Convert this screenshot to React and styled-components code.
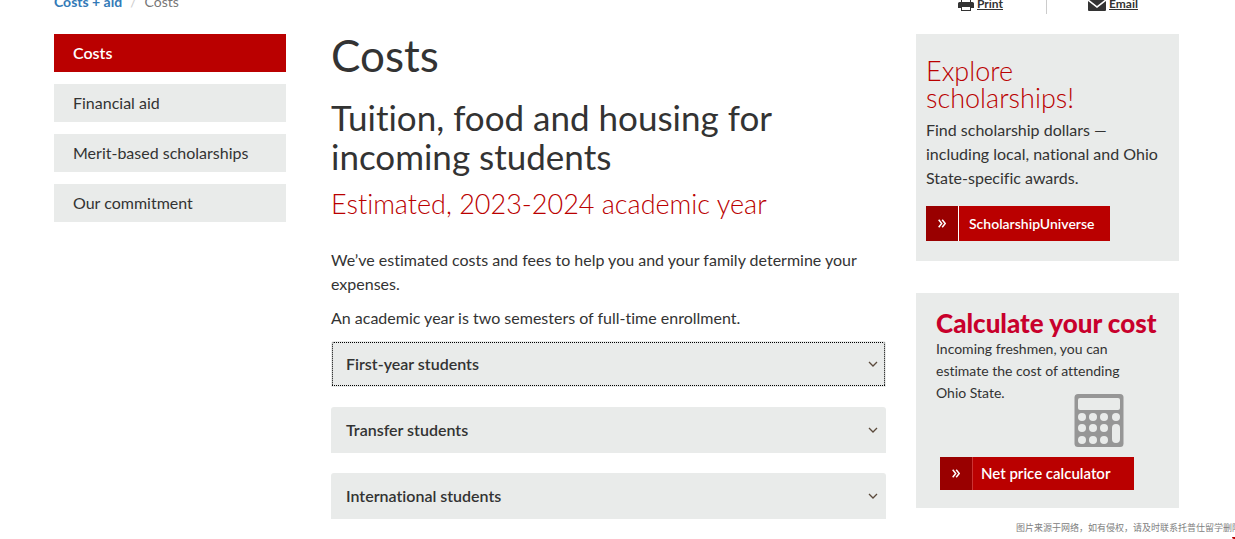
import React from 'react'
import styled, { createGlobalStyle } from 'styled-components'

const sideLinks = [
    { id: 1, title: 'Costs', active: true },
    { id: 2, title: 'Financial aid' },
    { id: 3, title: 'Merit-based scholarships' },
    { id: 4, title: 'Our commitment' },
]

const panels = [
    { id: 1, title: 'First-year students', focused: true },
    { id: 2, title: 'Transfer students' },
    { id: 3, title: 'International students' },
]

function PrintIcon(){
    return (
        <svg width="16" height="16" viewBox="0 0 16 16" aria-hidden="true">
            <path fill="#333" d="M3 6V1h8l2 2v3h-1V4h-2V2H4v4zM1.500 6h13Q16 6 16 7.500V12h-3v3H3v-3H0V7.500Q0 6 1.500 6zM4 11v3h8v-3z" />
        </svg>
    )
}

function MailIcon(){
    return (
        <svg width="18" height="14" viewBox="0 0 18 14" aria-hidden="true">
            <path fill="#333" d="M1 0h16q1 0 1 1v1L9 9 0 2V1q0-1 1-1zM0 4l9 7 9-7v9q0 1-1 1H1q-1 0-1-1z" />
        </svg>
    )
}

function Chevron(){
    return (
        <svg width="10" height="6" viewBox="0 0 10 6" aria-hidden="true">
            <path d="M1 1l4 4 4-4" fill="none" stroke="#5b4a3c" strokeWidth="1.300" />
        </svg>
    )
}

function DoubleArrow(){
    return (
        <svg width="8" height="9" viewBox="0 0 8 9" aria-hidden="true">
            <path d="M0.700 0.700l3 3.800-3 3.800M4.200 0.700l3 3.800-3 3.800" fill="none" stroke="#fff" strokeWidth="1.500" />
        </svg>
    )
}

function CalculatorIcon(){
    const dots = [[8, 23], [19, 23], [30, 23], [42, 23], [8, 34], [19, 34], [30, 34], [8, 46], [19, 46], [30, 46]]

    return (
        <CalcSvg width="50" height="54" viewBox="0 0 50 54" aria-hidden="true">
            <rect x="0.500" width="49" height="53" rx="3.500" fill="#969696" />
            <rect x="4" y="4" width="42" height="12" rx="2" fill="#e9ebea" />
            {dots.map(([x, y]) => <circle key={x + '-' + y} cx={x} cy={y} r="4" fill="#e9ebea" />)}
            <rect x="38" y="30" width="8" height="19" rx="4" fill="#e9ebea" />
        </CalcSvg>
    )
}

function App(){
    return (
        <>
            <GlobalStyle />
            <Page>
                <TopBar>
                    <Breadcrumb aria-label="Breadcrumb">
                        <a href="#aid">Costs + aid</a>
                        <i>/</i>
                        <span>Costs</span>
                    </Breadcrumb>
                    <Tools>
                        <ToolLink href="#print"><PrintIcon /><span>Print</span></ToolLink>
                        <ToolLink href="#email" $divided><MailIcon /><span>Email</span></ToolLink>
                    </Tools>
                </TopBar>
                <Columns>
                    <SideNav>
                        {sideLinks.map((item) => {
                            return <SideLink key={item.id} href="#nav" $active={item.active}>{item.title}</SideLink>
                        })}
                    </SideNav>
                    <Main>
                        <h1>Costs</h1>
                        <h2>Tuition, food and housing for incoming students</h2>
                        <h3>Estimated, 2023-2024 academic year</h3>
                        <p>We’ve estimated costs and fees to help you and your family determine your expenses.</p>
                        <p>An academic year is two semesters of full-time enrollment.</p>
                        <Accordion>
                            {panels.map((item) => {
                                return (
                                    <Panel key={item.id} type="button" aria-expanded="false" $focused={item.focused}>
                                        <span>{item.title}</span>
                                        <Chevron />
                                    </Panel>
                                )
                            })}
                        </Accordion>
                    </Main>
                    <Aside>
                        <ScholarCard>
                            <h3>Explore<br />scholarships!</h3>
                            <p>Find scholarship dollars —<br />including local, national and Ohio State-specific awards.</p>
                            <ArrowButton href="#scholarship">
                                <DoubleArrow />
                                <span>ScholarshipUniverse</span>
                            </ArrowButton>
                        </ScholarCard>
                        <CostCard>
                            <h3>Calculate your cost</h3>
                            <p>Incoming freshmen, you can<br />estimate the cost of attending<br />Ohio State.</p>
                            <CalculatorIcon />
                            <ArrowButton href="#calculator" $soft>
                                <DoubleArrow />
                                <span>Net price calculator</span>
                            </ArrowButton>
                        </CostCard>
                    </Aside>
                </Columns>
            </Page>
            <Credit>图片来源于网络，如有侵权，请及时联系托普仕留学删除</Credit>
            <CornerMark />
        </>
    )
}

const GlobalStyle = createGlobalStyle`
    * {
        box-sizing: border-box;
    }

    body {
        margin: 0;
        overflow: hidden;
        background: #fff;
        color: #333;
        font: 16px/24px Lato, "Liberation Sans", sans-serif;
        font-variant-ligatures: none;
    }

    h1, h2, h3, p {
        margin: 0;
        font-weight: 400;
    }
`;

const Page = styled.div`
    margin-top: -10px;
    padding: 0 56px 0 54px;
`;

const TopBar = styled.div`
    display: flex;
    justify-content: space-between;
    height: 24px;
    margin-bottom: 20px;
`;

const Breadcrumb = styled.nav`
    display: flex;
    gap: 8px;
    font-size: 14px;
    color: #777;

    a {
        color: #337ab7;
        font-weight: 700;
        text-decoration: none;
    }

    i {
        color: #ccc;
        font-style: normal;
    }
`;

const Tools = styled.div`
    display: flex;
`;

const ToolLink = styled.a`
    display: flex;
    align-items: center;
    gap: 3px;
    width: ${props => props.$divided ? '133px' : '88px'};
    padding: 4px 0 0 ${props => props.$divided ? '41px' : '0'};
    border-left: ${props => props.$divided ? '1px solid #ccc' : '0'};
    color: #333;
    font-size: 12px;
    font-weight: 700;
`;

const Columns = styled.div`
    display: grid;
    grid-template-columns: minmax(0, 247fr) minmax(0, 555fr) minmax(0, 263fr);
    column-gap: 30px;
    align-items: start;
`;

const SideNav = styled.nav`
    display: flex;
    flex-direction: column;
    gap: 12px;
    margin-right: 15px;
`;

const SideLink = styled.a`
    padding: 7px 19px;
    background: ${props => props.$active ? '#ba0000' : '#e9ebea'};
    color: ${props => props.$active ? '#fff' : '#333'};
    font-weight: ${props => props.$active ? 600 : 400};
    text-decoration: none;
`;

const Main = styled.main`
    h1 {
        font-size: 44px;
        line-height: 43px;
    }

    h2 {
        margin-top: 21px;
        font-size: 35px;
        line-height: 39px;
    }

    h3 {
        margin: 13px 0 29px;
        color: #ba0000;
        font-size: 27px;
        font-weight: 300;
        line-height: 30px;
    }

    p {
        margin-bottom: 10px;
    }
`;

const Accordion = styled.div`
    display: flex;
    flex-direction: column;
    gap: 20px;
    padding-top: 1px;
`;

const Panel = styled.button`
    display: flex;
    align-items: center;
    justify-content: space-between;
    height: 46px;
    padding: 0 8px 0 15px;
    border: 0;
    border-radius: 3px 3px 0 0;
    background: #e9ebea;
    color: #333;
    font: 600 16px/24px Lato, "Liberation Sans", sans-serif;
    font-variant-ligatures: none;
    outline: ${props => props.$focused ? '1px dotted #000' : 'none'};
    outline-offset: -2px;
`;

const Aside = styled.aside`
    display: flex;
    flex-direction: column;
    gap: 32px;
`;

const ScholarCard = styled.section`
    padding: 23px 10px 20px;
    background: #e9ebea;

    h3 {
        margin-bottom: 7px;
        color: #ba0000;
        font-size: 27px;
        font-weight: 300;
        line-height: 27px;
    }

    p {
        margin-bottom: 16px;
    }
`;

const CostCard = styled.section`
    padding: 17px 20px 18px;
    background: #e9ebea;

    h3 {
        margin-bottom: 1px;
        color: #c8002c;
        font-size: 26px;
        font-weight: 900;
        line-height: 27px;
        white-space: nowrap;
    }

    p {
        font-size: 14px;
        line-height: 22px;
    }
`;

const CalcSvg = styled.svg`
    display: block;
    margin: -10px 0 9px 138px;
`;

const ArrowButton = styled.a`
    display: inline-flex;
    align-items: stretch;
    height: ${props => props.$soft ? '33px' : '35px'};
    margin-left: ${props => props.$soft ? '4px' : '0'};
    background: #ba0000;
    color: #fff;
    font-size: ${props => props.$soft ? '15px' : '14px'};
    font-weight: 600;
    line-height: ${props => props.$soft ? '33px' : '35px'};
    text-decoration: none;
    vertical-align: top;

    svg {
        box-sizing: content-box;
        padding: ${props => props.$soft ? '12px' : '13px 12px'};
        height: 9px;
        background: #900;
    }

    span {
        padding: 0 ${props => props.$soft ? '24px 0 8px' : '15px 0 10px'};
        border-left: 1px solid ${props => props.$soft ? '#c33' : '#fff'};
    }
`;

const Credit = styled.footer`
    display: flex;
    margin: 2px -6px 0 0;
    justify-content: flex-end;
    color: #808080;
    font: 9px/14px "Noto Sans CJK SC", sans-serif;
    white-space: nowrap;
`;

const CornerMark = styled.div`
    position: fixed;
    right: 0;
    bottom: 0;
    width: 3px;
    height: 2px;
    background: #ba0000;
    border-bottom-left-radius: 2px;
`;

export default App
